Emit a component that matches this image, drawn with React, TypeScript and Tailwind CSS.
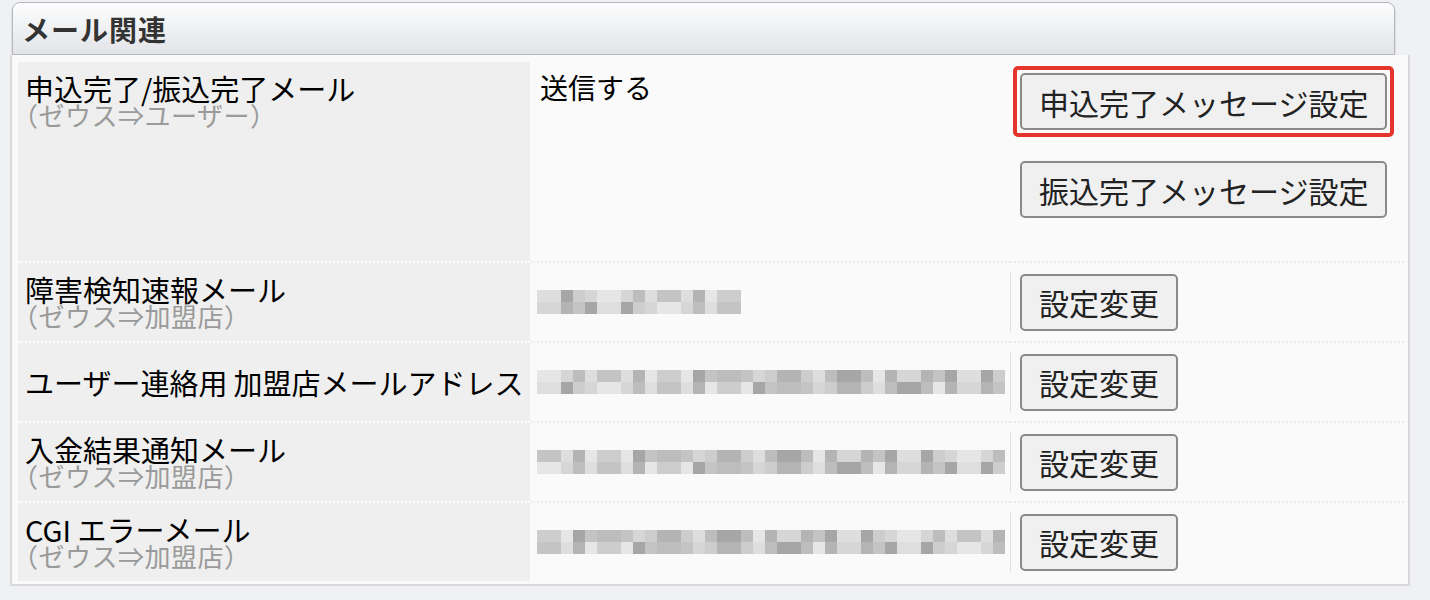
import React from "react";

type Row = {
  label: React.ReactNode;
  sub?: string;
  blur: number;
};

const rows: Row[] = [
  { label: "障害検知速報メール", sub: "（ゼウス⇒加盟店）", blur: 17 },
  {
    label: (
      <>
        ユーザー連絡用<span className="inline-block w-[6px]" />加盟店メールアドレス
      </>
    ),
    blur: 39,
  },
  { label: "入金結果通知メール", sub: "（ゼウス⇒加盟店）", blur: 39 },
  { label: "CGI エラーメール", sub: "（ゼウス⇒加盟店）", blur: 39 },
];

// pixelated (mosaic) stand-in for masked addresses
const shades = [
  "bg-[#d6d6d6]",
  "bg-[#c4c4c4]",
  "bg-[#b4b4b4]",
  "bg-[#dedede]",
  "bg-[#cdcdcd]",
  "bg-[#a6a6a6]",
  "bg-[#e6e6e6]",
  "bg-[#bdbdbd]",
];

function Mosaic({ count, seed }: { count: number; seed: number }) {
  const cells = (row: number) =>
    Array.from({ length: count }, (_, i) => {
      const n = (i * 7 + row * 5 + seed * 3 + ((i * i) % 5)) % shades.length;
      return <div key={i} className={`h-3 w-3 ${shades[n]}`} />;
    });
  return (
    <div className="flex flex-col">
      <div className="flex">{cells(0)}</div>
      <div className="flex">{cells(1)}</div>
    </div>
  );
}

function Btn({ children }: { children: React.ReactNode }) {
  return (
    <button className="h-[57px] rounded-[5px] border-2 border-[#8a8a8a] bg-[#f0f0f0] px-[17px] text-[30px] leading-none text-[#222] whitespace-nowrap">
      {children}
    </button>
  );
}

function Label({ label, sub }: { label: React.ReactNode; sub?: string }) {
  return (
    <div>
      <div className="text-[29px] leading-[28px] text-black whitespace-nowrap">{label}</div>
      {sub && (
        <div className="text-[26px] leading-[26px] tracking-[0.5px] text-[#9a9a9a] whitespace-nowrap [font-feature-settings:'halt']">
          {sub}
        </div>
      )}
    </div>
  );
}

export default function App() {
  return (
    <div
      className="h-[600px] w-[1430px] bg-[#f0f1f5] pl-[10px] pt-[2px]"
      style={{ fontFamily: '"Noto Sans CJK JP", "Noto Sans", sans-serif' }}
    >
      {/* section header */}
      <div className="ml-[2px] flex h-[53px] w-[1383px] items-center rounded-t-[8px] border border-[#b5b7bb] bg-gradient-to-b from-[#fdfdfe] to-[#e2e4e8] pl-[9px] shadow-[0_2px_2px_rgba(0,0,0,0.25)]">
        <span className="text-[28px] font-bold tracking-[1px] text-[#333]">メール関連</span>
      </div>

      {/* panel */}
      <div className="w-[1400px] border-2 border-t-0 border-[#d9d9d9] bg-[#fafafa] pb-[3px] pl-[6px] pr-[4px] pt-[7px]">
        {/* first row: two message buttons */}
        <div className="grid h-[199px] grid-cols-[512px_480px_1fr]">
          <div className="bg-[#efefef] pl-[7px] pt-[12px]">
            <Label label="申込完了/振込完了メール" sub="（ゼウス⇒ユーザー）" />
          </div>
          <div className="pl-[10px] pt-[11px] text-[28px] leading-[28px] text-black">送信する</div>
          <div className="flex flex-col items-start gap-[24px] pl-[3px] pt-[4px]">
            <div className="rounded-[5px] border-4 border-[#e5352b] p-[3px]">
              <Btn>申込完了メッセージ設定</Btn>
            </div>
            <div className="pl-[7px]">
              <Btn>振込完了メッセージ設定</Btn>
            </div>
          </div>
        </div>

        {rows.map((r, i) => (
          <div key={i} className="grid h-[80px] grid-cols-[512px_480px_1fr]">
            <div className="flex items-center border-t-2 border-dotted border-white bg-[#efefef] pl-[7px]">
              <Label label={r.label} sub={r.sub} />
            </div>
            <div className="flex items-center border-t-2 border-dotted border-[#ececec] pl-[7px]">
              <Mosaic count={r.blur} seed={i + 1} />
            </div>
            <div className="flex items-center border-t-2 border-dotted border-[#ececec] py-[8px]">
              <div className="flex h-full items-center border-l border-[#e2e2e2] pl-[9px]">
                <Btn>設定変更</Btn>
              </div>
            </div>
          </div>
        ))}
      </div>
    </div>
  );
}
